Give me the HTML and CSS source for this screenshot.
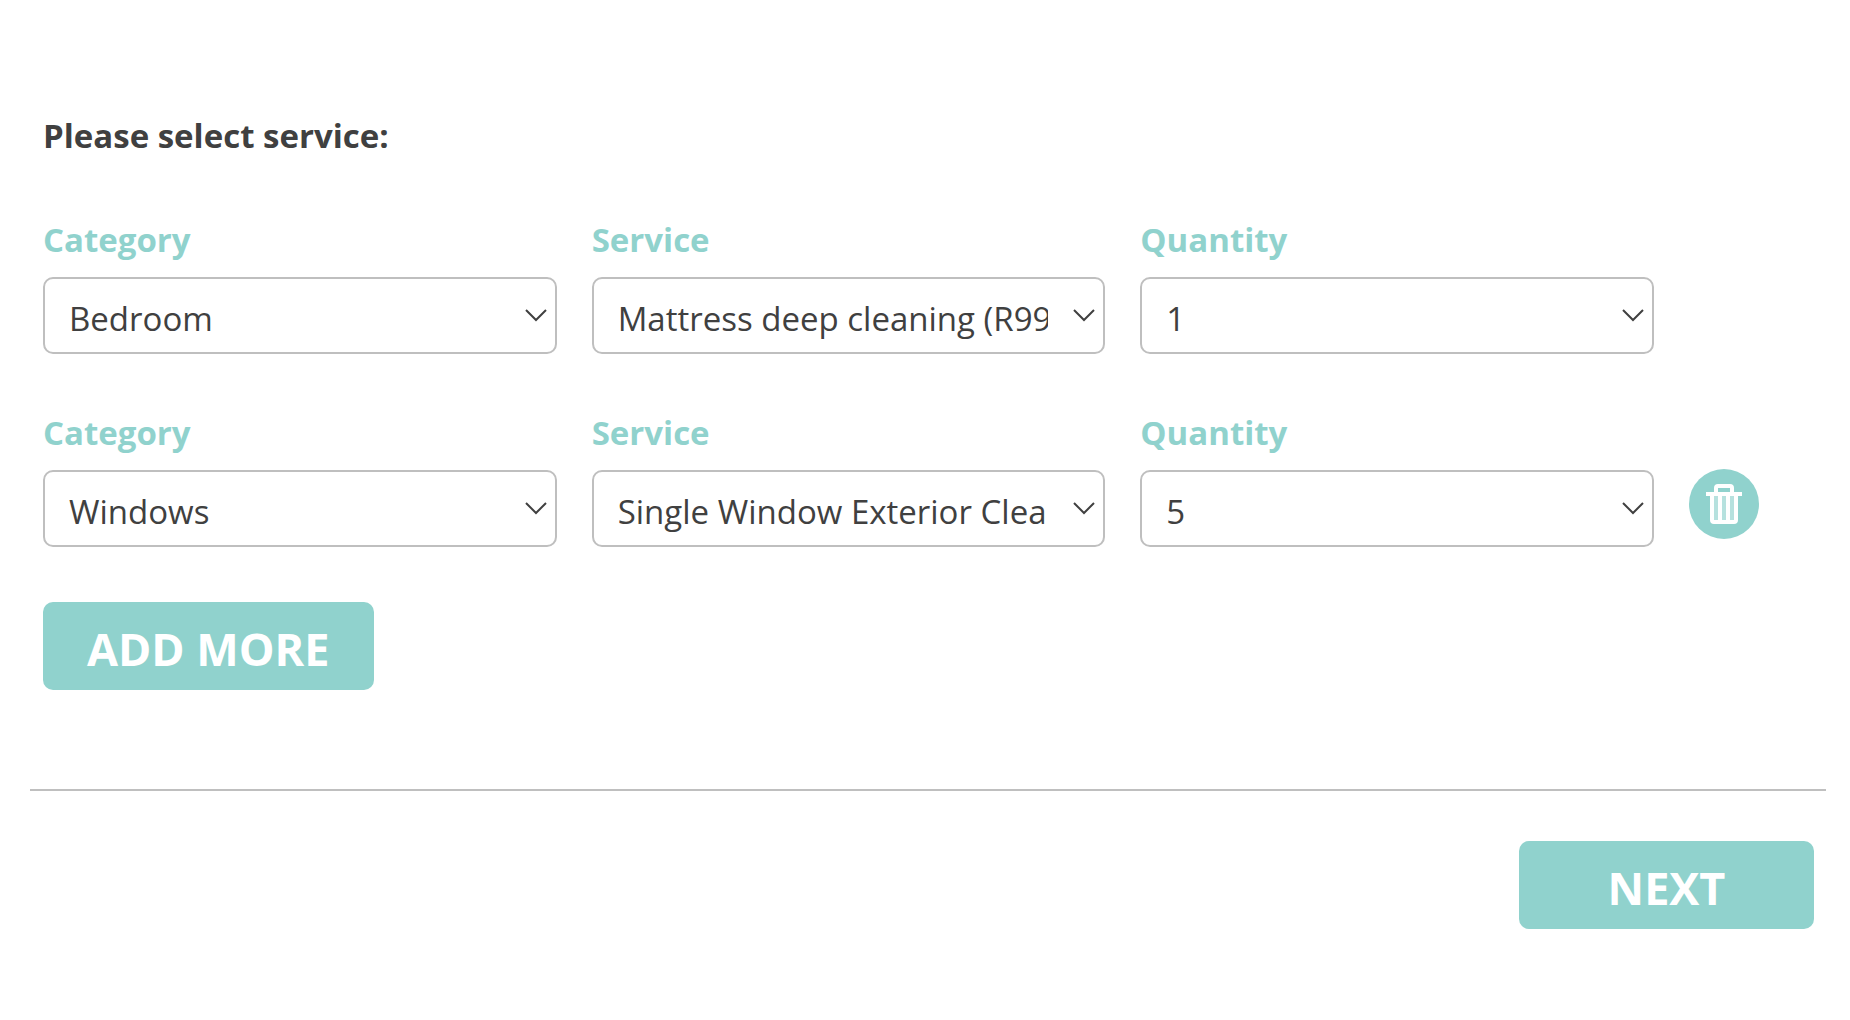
FILE: index.html
```html
<!DOCTYPE html>
<html lang="en">
<head>
<meta charset="utf-8">
<meta name="viewport" content="width=device-width, initial-scale=1">
<title>Select service</title>
<link rel="stylesheet" href="styles.css">
</head>
<body>
<form class="booking">
  <section class="services">
    <h1 class="title">Please select service:</h1>
    <div class="service-row">
      <div class="field">
        <label class="label" for="category-1">Category</label>
        <select class="select" id="category-1"><option>Bedroom</option><option>Windows</option></select>
      </div>
      <div class="field">
        <label class="label" for="service-1">Service</label>
        <select class="select" id="service-1"><option>Mattress deep cleaning (R999)</option></select>
      </div>
      <div class="field">
        <label class="label" for="quantity-1">Quantity</label>
        <select class="select" id="quantity-1"><option>1</option><option>2</option><option>3</option><option>4</option><option>5</option></select>
      </div>
    </div>
    <div class="service-row">
      <div class="field">
        <label class="label" for="category-2">Category</label>
        <select class="select" id="category-2"><option>Bedroom</option><option selected>Windows</option></select>
      </div>
      <div class="field">
        <label class="label" for="service-2">Service</label>
        <select class="select" id="service-2"><option>Single Window Exterior Cleaning</option></select>
      </div>
      <div class="field">
        <label class="label" for="quantity-2">Quantity</label>
        <select class="select" id="quantity-2"><option>1</option><option>2</option><option>3</option><option>4</option><option selected>5</option></select>
      </div>
      <button class="remove" type="button" aria-label="Remove service">
        <svg class="remove-icon" viewBox="0 0 70 70" aria-hidden="true">
          <path class="bin-fill" d="M22 27h26v27h-26z"/>
          <path class="bin-line" d="M17 25h36M27 25v-6q0-2 2-2h12q2 0 2 2v6M23 25v26q0 2 2 2h20q2 0 2-2v-26M31 27v25M39 27v25"/>
        </svg>
      </button>
    </div>
    <button class="button" type="button">ADD MORE</button>
  </section>
  <footer class="footer">
    <button class="button button-next" type="submit">NEXT</button>
  </footer>
</form>
</body>
</html>
```
FILE: styles.css
```css
:root {
  --teal: #90d2cd;
  --line: #bfbfbf;
  --ink: #404040;
}

* {
  box-sizing: border-box;
}

body {
  margin: 0;
  background: #fff;
  color: var(--ink);
  font-family: "Segoe UI", "Open Sans", "Noto Sans", sans-serif;
}

.booking {
  padding: 112px 24px 40px 30px;
}

.services {
  padding: 0 67px 99px 13px;
}

.title {
  margin: 0 0 56px;
  font-size: 33px;
  line-height: 48px;
}

.service-row {
  display: grid;
  grid-template-columns: repeat(3, minmax(0, 1fr)) 70px;
  column-gap: 35px;
  align-items: end;
  margin-bottom: 55px;
}

.field {
  display: flex;
  flex-direction: column;
  gap: 13px;
}

.label {
  color: var(--teal);
  font-size: 33px;
  font-weight: 700;
  line-height: 48px;
}

.select {
  appearance: none;
  width: 100%;
  height: 77px;
  padding: 6px 55px 0 24px;
  border: 2px solid var(--line);
  border-radius: 10px;
  background: #fff url("data:image/svg+xml,%3Csvg xmlns='http://www.w3.org/2000/svg' width='22' height='14' viewBox='0 0 22 14'%3E%3Cpath d='M1 1l10 10L21 1' fill='none' stroke='%23404040' stroke-width='2'/%3E%3C/svg%3E") no-repeat right 8px center;
  color: var(--ink);
  font-family: inherit;
  font-size: 33px;
}

.remove {
  align-self: end;
  width: 70px;
  height: 70px;
  margin-bottom: 8px;
  padding: 0;
  border: 0;
  border-radius: 50%;
  background: var(--teal);
}

.remove-icon {
  display: block;
  width: 70px;
  height: 70px;
}

.bin-fill {
  fill: #fff;
  opacity: 0.35;
}

.bin-line {
  fill: none;
  stroke: #fff;
  stroke-width: 4;
}

.button {
  display: block;
  height: 88px;
  padding: 4px 44px 0;
  border: 0;
  border-radius: 10px;
  background: var(--teal);
  color: #fff;
  font-family: inherit;
  font-size: 45px;
  font-weight: 700;
}

.footer {
  display: flex;
  justify-content: flex-end;
  padding: 50px 12px 0;
  border-top: 2px solid var(--line);
}

.button-next {
  min-width: 295px;
}
```
